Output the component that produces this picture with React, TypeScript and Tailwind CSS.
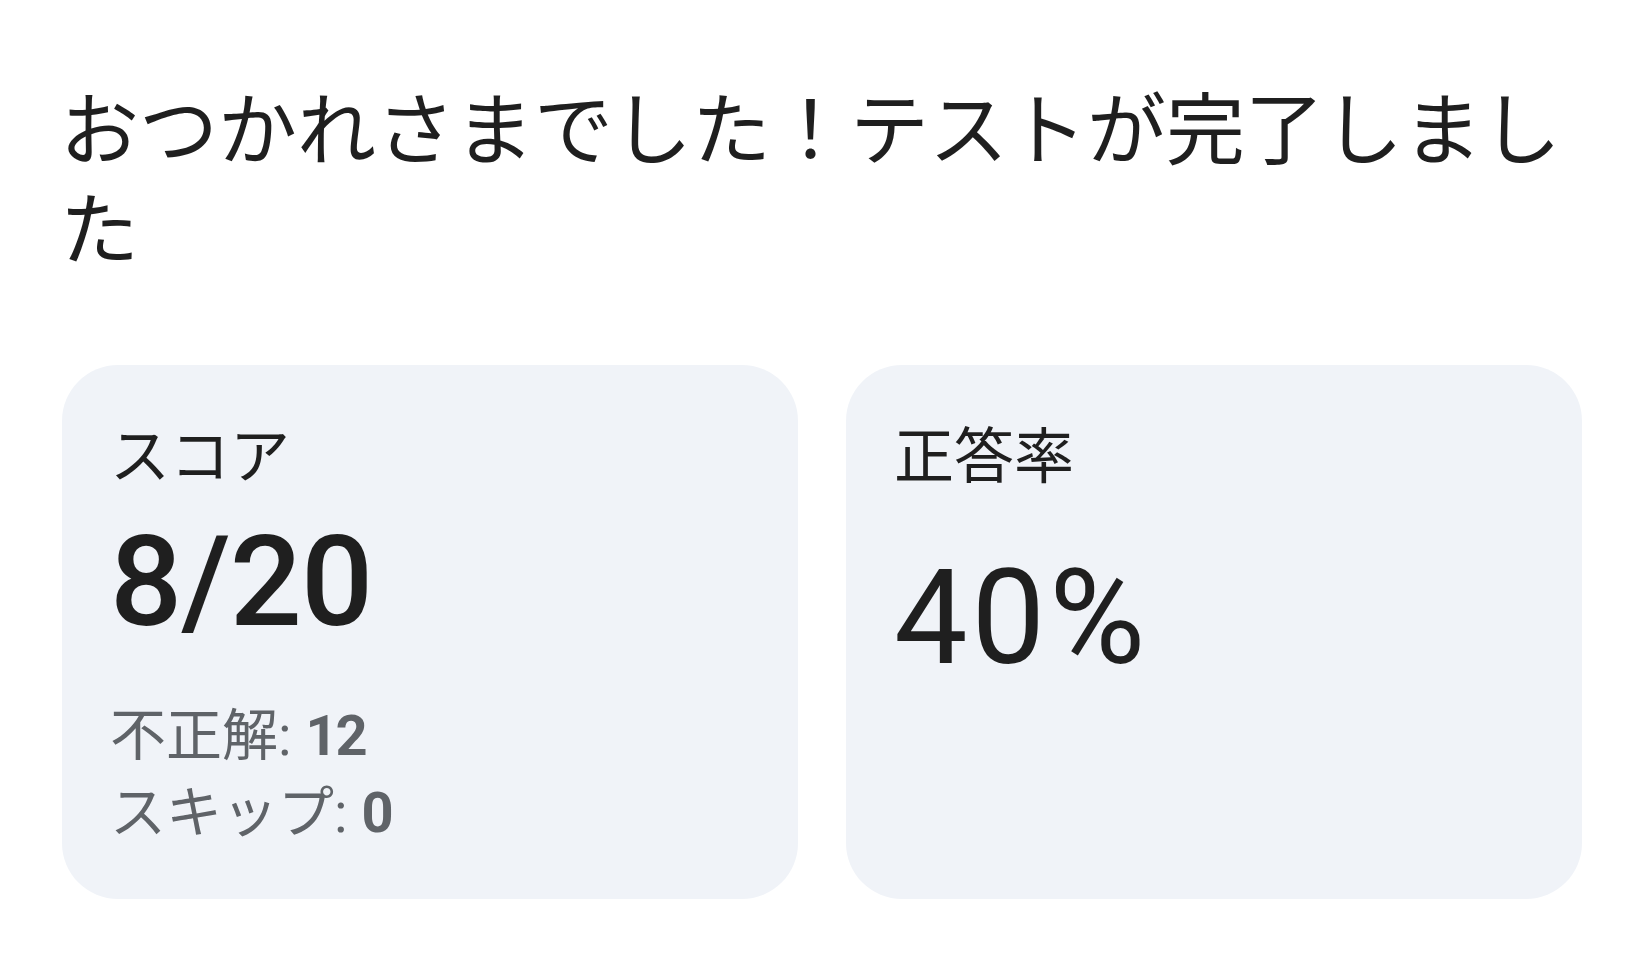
export default function App() {
  return (
    <div
      className="min-h-screen bg-white pl-[62px] pr-[62px] pt-[82px] text-[#1f1f1f]"
      style={{ fontFamily: "Roboto, 'Noto Sans CJK JP', sans-serif" }}
    >
      <h1 className="-ml-[2px] text-[79px] leading-[100px] font-normal">
        おつかれさまでした！テストが完了しました
      </h1>

      <div className="mt-[83px] grid grid-cols-2 gap-[48px]">
        {/* Score card */}
        <div className="rounded-[56px] bg-[#f0f3f8] px-[48px] pt-[48px] pb-[47px]">
          <div className="text-[60px] leading-[90px]">スコア</div>
          <div className="text-[127px] leading-[158px] font-medium tracking-[-1px]">8/20</div>
          <div className="mt-[37px] text-[56px] leading-[77px] text-[#5f6368]">
            <p>
              不正解: <span className="font-bold tracking-[-2px]">12</span>
            </p>
            <p>
              スキップ: <span className="font-bold">0</span>
            </p>
          </div>
        </div>

        {/* Accuracy card */}
        <div className="rounded-[56px] bg-[#f0f3f8] px-[48px] pt-[48px] pb-[47px]">
          <div className="text-[60px] leading-[90px]">正答率</div>
          <div className="mt-[36px] text-[131px] leading-[158px] font-normal tracking-[4px]">40%</div>
        </div>
      </div>
    </div>
  )
}
